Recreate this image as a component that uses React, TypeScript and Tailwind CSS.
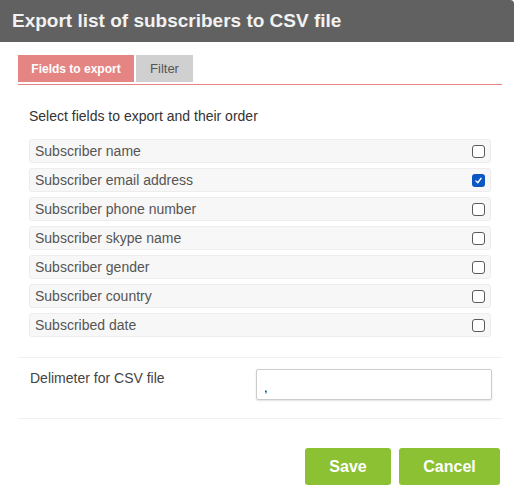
import React, { FC, useState } from "react";

const fields = [
  "Subscriber name",
  "Subscriber email address",
  "Subscriber phone number",
  "Subscriber skype name",
  "Subscriber gender",
  "Subscriber country",
  "Subscribed date",
];

const Checkbox: FC<{ checked: boolean; onChange: () => void }> = ({ checked, onChange }) => {
  return (
    <button
      type="button"
      onClick={onChange}
      className={
        checked
          ? "flex h-[13px] w-[13px] items-center justify-center rounded-[3px] bg-[#0b56c2]"
          : "h-[13px] w-[13px] rounded-[3px] border border-[#5a5a5a] bg-white"
      }
    >
      {checked && (
        <svg viewBox="0 0 12 12" className="h-[9px] w-[9px]">
          <path d="M2.5 6.5 L5 9 L9.5 3" fill="none" stroke="white" strokeWidth="1.8" strokeLinecap="round" strokeLinejoin="round" />
        </svg>
      )}
    </button>
  );
};

const App: FC = () => {
  const [selected, setSelected] = useState<string[]>(["Subscriber email address"]);
  const [tab, setTab] = useState("fields");
  const [delimiter, setDelimiter] = useState(",");

  const toggle = (field: string) =>
    setSelected((current) =>
      current.includes(field) ? current.filter((f) => f !== field) : [...current, field]
    );

  return (
    <div className="h-[502px] w-[516px] bg-white font-['Liberation_Sans',Arial,sans-serif]">
      <div className="flex h-[42px] w-[514px] items-center rounded-tr-[4px] bg-[#616161] px-[12px]">
        <h1 className="text-[19px] font-bold text-[#f2f2f2]">Export list of subscribers to CSV file</h1>
      </div>

      <div className="pl-[18px] pr-[14px] pt-[13px]">
        {/* Tabs */}
        <div className="flex gap-[2px] border-b border-[#e58583] pb-[2px]">
          <button
            type="button"
            onClick={() => setTab("fields")}
            className={
              tab === "fields"
                ? "h-[27px] w-[116px] bg-[#e58583] text-[12px] font-bold text-white"
                : "h-[27px] w-[116px] bg-[#d0d0d0] text-[13px] text-[#555]"
            }
          >
            Fields to export
          </button>
          <button
            type="button"
            onClick={() => setTab("filter")}
            className={
              tab === "filter"
                ? "h-[27px] w-[57px] bg-[#e58583] text-[12px] font-bold text-white"
                : "h-[27px] w-[57px] bg-[#d0d0d0] text-[13px] text-[#555]"
            }
          >
            Filter
          </button>
        </div>

        <div className="px-[11px]">
          <p className="mt-[22px] text-[14px] leading-[18px] text-[#333]">Select fields to export and their order</p>
          <div className="mt-[14px] flex flex-col gap-[5px]">
            {fields.map((field) => (
              <div
                key={field}
                className="flex h-[24px] items-center justify-between rounded-[3px] border border-[#ededed] bg-[#f7f7f7] pl-[5px] pr-[5px]"
              >
                <span className="text-[14px] text-[#555]">{field}</span>
                <Checkbox checked={selected.includes(field)} onChange={() => toggle(field)} />
              </div>
            ))}
          </div>
        </div>

        <div className="mt-[20px] flex items-start justify-between border-y border-[#f0f0f0] pb-[18px] pl-[12px] pr-[10px] pt-[11px]">
          <span className="mt-[1px] text-[14px] leading-[16px] text-[#444]">Delimeter for CSV file</span>
          <input
            value={delimiter}
            onChange={(e) => setDelimiter(e.target.value)}
            className="h-[31px] w-[236px] rounded-[2px] border border-[#cccccc] px-[7px] pt-[6px] text-[13px] text-black shadow-[0_1px_2px_rgba(0,0,0,0.12)] outline-none"
          />
        </div>

        <div className="mt-[29px] flex justify-end gap-[8px] pr-[2px]">
          <button type="button" className="h-[37px] w-[86px] rounded-[3px] bg-[#8bc132] text-[16px] font-bold text-white">
            Save
          </button>
          <button type="button" className="h-[37px] w-[101px] rounded-[3px] bg-[#8bc132] text-[16px] font-bold text-white">
            Cancel
          </button>
        </div>
      </div>
    </div>
  );
};

export default App;
